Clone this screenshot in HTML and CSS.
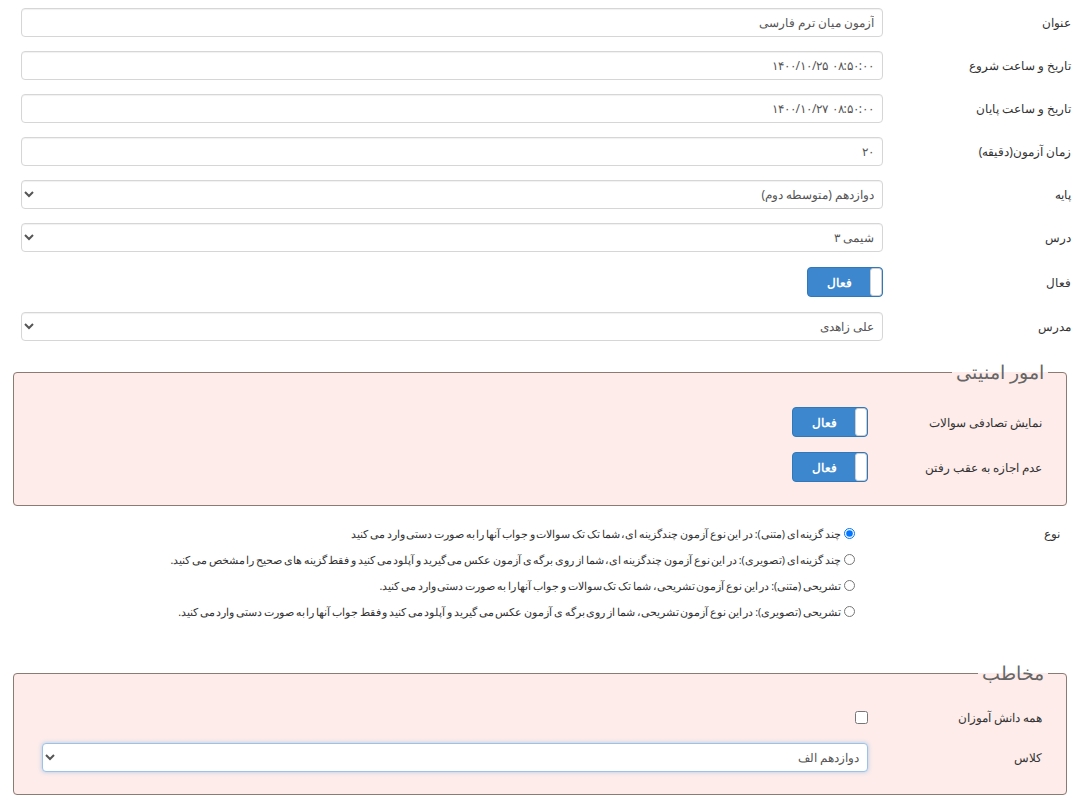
FILE: index.html
```html
<!DOCTYPE html>
<html lang="fa" dir="rtl">
<head>
    <meta charset="UTF-8">
    <meta name="viewport" content="width=device-width, initial-scale=1.0">
    <title>ویرایش آزمون</title>
    <link rel="stylesheet" href="styles.css">
</head>
<body>
    <form class="exam-form">
        <div class="form-row">
            <label class="form-label">عنوان</label>
            <div class="form-field"><input type="text" class="form-input" value="آزمون میان ترم فارسی"></div>
        </div>
        <div class="form-row">
            <label class="form-label">تاریخ و ساعت شروع</label>
            <div class="form-field"><input type="text" class="form-input" dir="ltr" value="۱۴۰۰/۱۰/۲۵ ۰۸:۵۰:۰۰"></div>
        </div>
        <div class="form-row">
            <label class="form-label">تاریخ و ساعت پایان</label>
            <div class="form-field"><input type="text" class="form-input" dir="ltr" value="۱۴۰۰/۱۰/۲۷ ۰۸:۵۰:۰۰"></div>
        </div>
        <div class="form-row">
            <label class="form-label">زمان آزمون(دقیقه)</label>
            <div class="form-field"><input type="text" class="form-input" value="۲۰"></div>
        </div>
        <div class="form-row">
            <label class="form-label">پایه</label>
            <div class="form-field">
                <select class="form-select"><option>دوازدهم (متوسطه دوم)</option></select>
            </div>
        </div>
        <div class="form-row">
            <label class="form-label">درس</label>
            <div class="form-field">
                <select class="form-select"><option>شیمی ۳</option></select>
            </div>
        </div>
        <div class="form-row toggle-row">
            <label class="form-label">فعال</label>
            <div class="form-field">
                <div class="toggle"><span class="toggle-handle"></span><span class="toggle-on">فعال</span></div>
            </div>
        </div>
        <div class="form-row">
            <label class="form-label">مدرس</label>
            <div class="form-field">
                <select class="form-select"><option>علی زاهدی</option></select>
            </div>
        </div>

        <fieldset class="box">
            <legend>امور امنیتی</legend>
            <div class="box-row">
                <label class="box-label">نمایش تصادفی سوالات</label>
                <div class="form-field">
                    <div class="toggle"><span class="toggle-handle"></span><span class="toggle-on">فعال</span></div>
                </div>
            </div>
            <div class="box-row">
                <label class="box-label">عدم اجازه به عقب رفتن</label>
                <div class="form-field">
                    <div class="toggle"><span class="toggle-handle"></span><span class="toggle-on">فعال</span></div>
                </div>
            </div>
        </fieldset>

        <div class="type-row">
            <label class="type-label">نوع</label>
            <div class="type-list">
                <label class="type-item"><input type="radio" name="type" checked>چند گزینه ای (متنی): در این نوع آزمون چندگزینه ای، شما تک تک سوالات و جواب آنها را به صورت دستی وارد می کنید</label>
                <label class="type-item"><input type="radio" name="type">چند گزینه ای (تصویری): در این نوع آزمون چندگزینه ای، شما از روی برگه ی آزمون عکس می گیرید و آپلود می کنید و فقط گزینه های صحیح را مشخص می کنید.</label>
                <label class="type-item"><input type="radio" name="type">تشریحی (متنی): در این نوع آزمون تشریحی، شما تک تک سوالات و جواب آنها را به صورت دستی وارد می کنید.</label>
                <label class="type-item"><input type="radio" name="type">تشریحی (تصویری): در این نوع آزمون تشریحی، شما از روی برگه ی آزمون عکس می گیرید و آپلود می کنید و فقط جواب آنها را به صورت دستی وارد می کنید.</label>
            </div>
        </div>

        <fieldset class="box audience">
            <legend>مخاطب</legend>
            <div class="box-row check-row">
                <label class="box-label">همه دانش آموزان</label>
                <div class="form-field"><input type="checkbox" class="check"></div>
            </div>
            <div class="box-row">
                <label class="box-label">کلاس</label>
                <div class="form-field">
                    <select class="form-select focused"><option>دوازدهم الف</option></select>
                </div>
            </div>
        </fieldset>
    </form>
</body>
</html>
```

FILE: styles.css
```css
/* فرم ویرایش آزمون */
html, body {
    margin: 0;
}

body {
    direction: rtl;
    padding: 8px 9px 0 13px;
    background-color: #ffffff;
    font-family: 'Noto Sans', sans-serif;
    font-size: 12px;
    color: #333333;
}

.form-row {
    display: flex;
    align-items: center;
    margin: 0 0 14px 8px;
}

.form-label {
    flex: 0 0 188px;
    text-align: right;
}

.form-field {
    flex: 1;
    min-width: 0;
}

.form-input,
.form-select {
    width: 100%;
    height: 29px;
    box-sizing: border-box;
    padding: 0 8px;
    border: 1px solid #d6d6d6;
    border-radius: 4px;
    background-color: #ffffff;
    box-shadow: inset 0 1px 1px rgba(0, 0, 0, 0.06);
    font-family: inherit;
    font-size: 12px;
    color: #555555;
    text-align: right;
}

.form-select {
    padding: 0 4px 0 8px;
}

.form-select.focused {
    border-color: #9cc2e8;
    box-shadow: 0 0 4px rgba(102, 175, 233, 0.55);
}

.toggle-row {
    margin-top: 15px;
    margin-bottom: 15px;
}

.toggle {
    display: inline-flex;
    width: 76px;
    height: 30px;
    box-sizing: border-box;
    border: 1px solid #3177ba;
    border-radius: 4px;
    background-color: #3c87cd;
    overflow: hidden;
    vertical-align: middle;
}

.toggle-handle {
    flex: 0 0 10px;
    background-color: #ffffff;
    border: 1px solid #cfcfcf;
    border-radius: 3px;
}

.toggle-on {
    flex: 1;
    display: flex;
    align-items: center;
    justify-content: center;
    color: #ffffff;
    font-weight: bold;
    font-size: 12px;
}

/* کادرها */
.box {
    margin: 19px 4px 0 0;
    padding: 23px 24px 23px 28px;
    border: 1px solid #8b7b73;
    border-radius: 4px;
    background-color: #fdecea;
    min-width: 0;
}

.box legend {
    margin-right: -6px;
    padding: 0 4px;
    font-size: 19px;
    font-weight: normal;
    line-height: 24px;
    color: #666666;
}

.box-row {
    display: flex;
    align-items: center;
    margin-bottom: 15px;
}

.box-row:last-child {
    margin-bottom: 0;
}

.box-label {
    flex: 0 0 174px;
    text-align: right;
}

.audience {
    margin-top: 36px;
    padding-top: 22px;
    padding-bottom: 22px;
}

.check-row {
    height: 20px;
    margin-bottom: 16px;
}

.check {
    display: block;
    width: 13px;
    height: 13px;
    margin: 0;
}

/* نوع آزمون */
.type-row {
    display: flex;
    margin: 15px 11px 0 8px;
}

.type-label {
    flex: 0 0 205px;
    line-height: 26px;
    text-align: right;
}

.type-list {
    flex: 1;
}

.type-item {
    display: block;
    line-height: 26px;
    font-size: 10.5px;
    word-spacing: -1px;
    color: #333333;
}

.type-item input {
    width: 11px;
    height: 11px;
    margin: 0 0 0 3px;
    vertical-align: -1px;
}
```
